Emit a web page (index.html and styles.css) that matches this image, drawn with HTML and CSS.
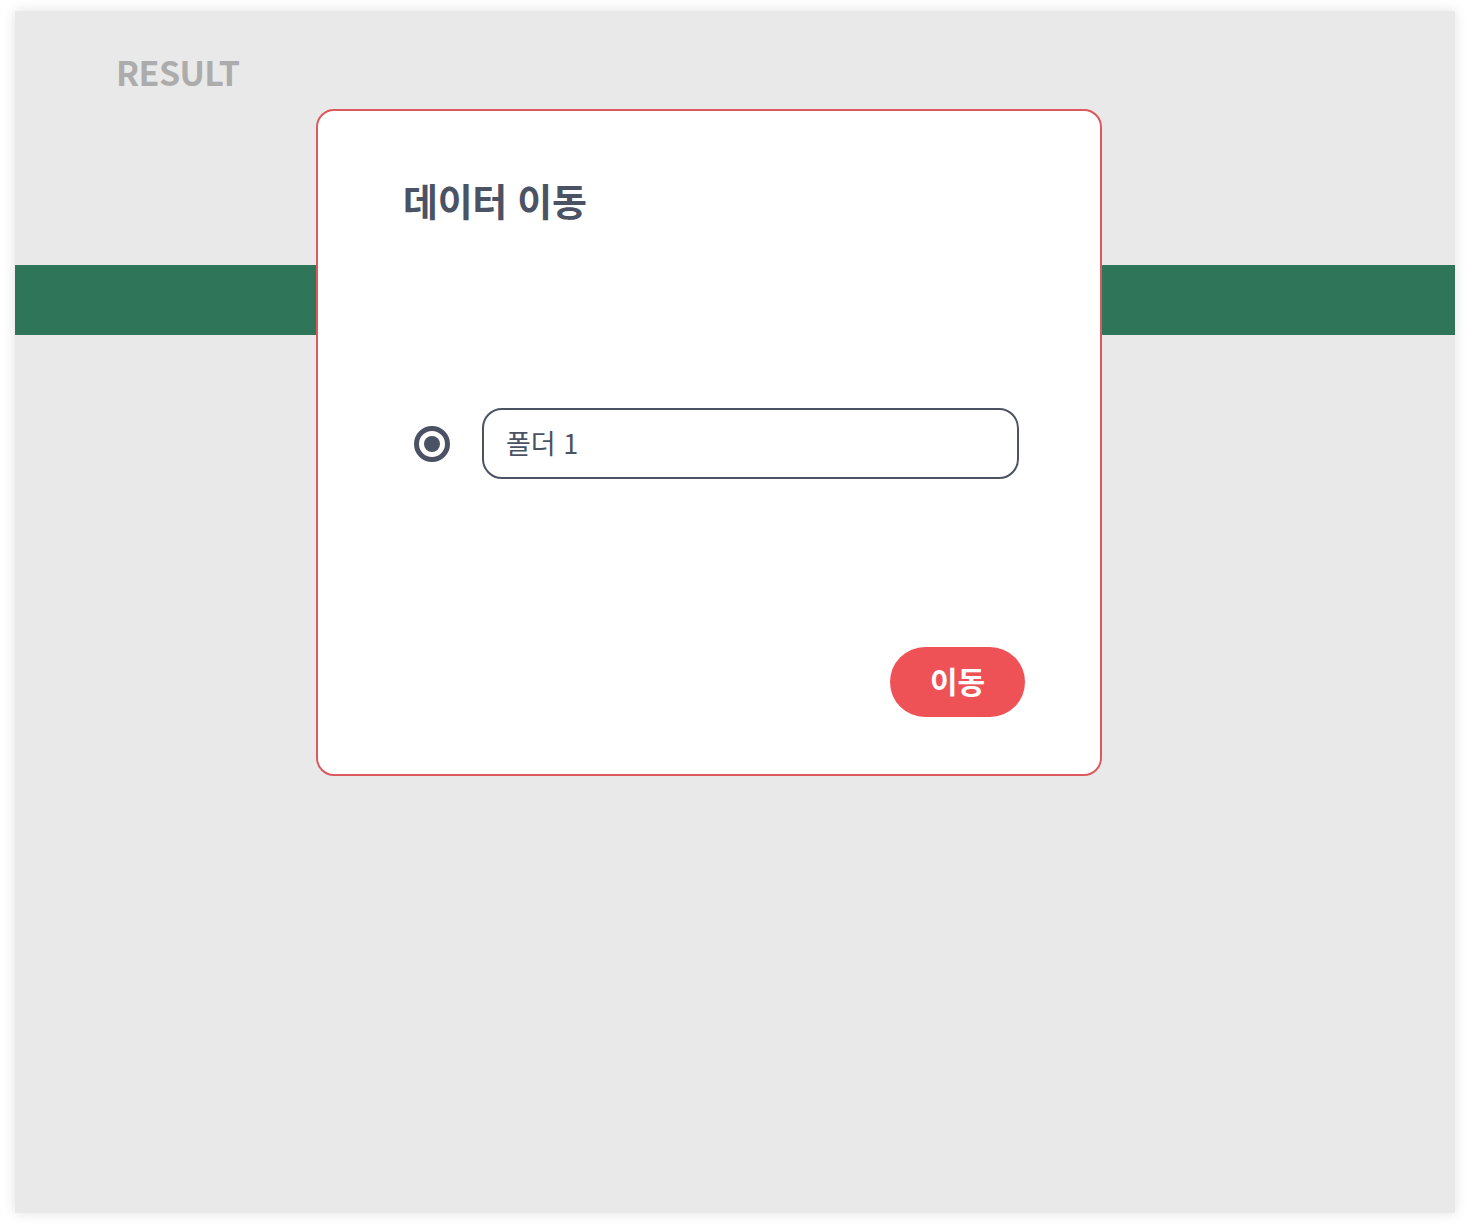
FILE: index.html
```html
<!DOCTYPE html>
<html lang="ko">
<head>
<meta charset="utf-8">
<link rel="stylesheet" href="styles.css">
</head>
<body>
<div class="panel">
  <div class="result">RESULT</div>
  <div class="band"></div>
  <div class="modal">
    <h2 class="title">데이터 이동</h2>
    <div class="row">
      <span class="radio"><span class="dot"></span></span>
      <div class="field">폴더 1</div>
    </div>
    <div class="actions">
      <button class="btn">이동</button>
    </div>
  </div>
</div>
</body>
</html>
```
FILE: styles.css
```css
html, body {
  margin: 0;
  padding: 0;
  background: #ffffff;
}
body {
  font-family: "Noto Sans CJK KR", "Noto Sans", sans-serif;
  padding: 11px 15px 17px;
}
.panel {
  position: relative;
  width: 1440px;
  height: 1202px;
  background: #e9e9e9;
  box-shadow: 0 0 12px rgba(0, 0, 0, 0.12);
}
.result {
  padding: 39px 0 0 101px;
  font-size: 34px;
  line-height: 44px;
  font-weight: 600;
  color: #acacac;
  letter-spacing: -0.6px;
}
.band {
  margin-top: 171px;
  height: 70px;
  background: #2e7559;
}
.modal {
  position: absolute;
  left: 301px;
  top: 98px;
  width: 782px;
  height: 663px;
  background: #ffffff;
  border: 2px solid #dc5a5d;
  border-radius: 18px;
  box-sizing: content-box;
  display: flex;
  flex-direction: column;
}
.title {
  margin: 64px 0 0 85px;
  font-size: 38px;
  line-height: 50px;
  font-weight: 700;
  color: #4a5263;
  letter-spacing: -0.3px;
}
.row {
  margin: 183px 0 0 96px;
  display: flex;
  align-items: center;
  gap: 32px;
}
.radio {
  width: 36px;
  height: 36px;
  box-sizing: border-box;
  border: 5px solid #4a5263;
  border-radius: 50%;
  display: flex;
  align-items: center;
  justify-content: center;
}
.dot {
  width: 16px;
  height: 16px;
  border-radius: 50%;
  background: #4a5263;
}
.field {
  width: 537px;
  height: 71px;
  box-sizing: border-box;
  border: 2px solid #4a5263;
  border-radius: 20px;
  padding: 0 22px 2px;
  display: flex;
  align-items: center;
  font-size: 27px;
  color: #4a5263;
}
.actions {
  margin: 168px 75px 0 0;
  display: flex;
  justify-content: flex-end;
}
.btn {
  width: 135px;
  height: 70px;
  border: none;
  border-radius: 35px;
  background: #ee5257;
  color: #ffffff;
  font-family: "Noto Sans CJK KR", "Noto Sans", sans-serif;
  font-size: 30px;
  line-height: 1;
  font-weight: 700;
  padding: 0 0 4px;
}
```
